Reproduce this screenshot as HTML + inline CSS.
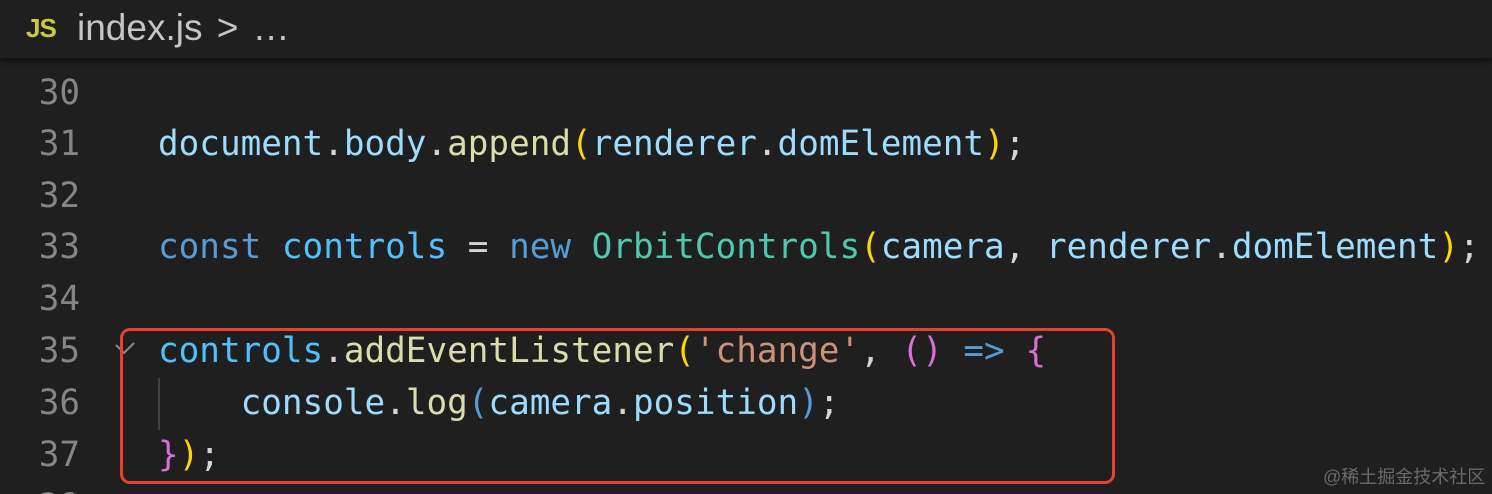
<!DOCTYPE html>
<html><head><meta charset="utf-8"><style>
html,body{margin:0;width:1492px;height:494px;overflow:hidden}
body{background:#1f1f1f;position:relative;font-family:"DejaVu Sans Mono",monospace;}
.hdr{position:absolute;left:0;top:0;width:1492px;height:58px;background:#1f1f1f;box-shadow:0 3px 6px rgba(0,0,0,.55);z-index:2}
.hdr .js{position:absolute;left:26px;top:13px;font:bold 26px "Liberation Sans",sans-serif;color:#cbcb41;letter-spacing:-1px}
.hdr .t{position:absolute;left:77px;top:7px;font:37px "Liberation Sans",sans-serif;color:#c5c5c5;word-spacing:4px}
.ln{position:absolute;left:0;width:80px;text-align:right;color:#858585;font-size:34.3px;line-height:52px}
.c{position:absolute;left:158px;font-size:34.3px;line-height:52px;white-space:pre;color:#d4d4d4}
.v{color:#9cdcfe}.k{color:#569cd6}.f{color:#dcdcaa}.cl{color:#4ec9b0}.s{color:#ce9178}.y{color:#ffd700}.p{color:#da70d6}.cc{color:#4fc1ff}
.box{position:absolute;left:120px;top:328px;width:989px;height:150px;border:3px solid #e5432d;border-radius:10px}
.guide{position:absolute;left:158px;top:378px;width:2px;height:52px;background:#404040}
.wm{position:absolute;left:1323px;top:463px;font:18px "Liberation Sans","Noto Sans CJK SC",sans-serif;color:#6a6a6a}
</style></head><body>
<div class="hdr"><span class="js">JS</span><span class="t">index.js &gt; …</span></div>
<div class="ln" style="top:67px">30</div>
<div class="ln" style="top:118px">31</div>
<div class="ln" style="top:170px">32</div>
<div class="ln" style="top:221px">33</div>
<div class="ln" style="top:273px">34</div>
<div class="ln" style="top:325px">35</div>
<div class="ln" style="top:377px">36</div>
<div class="ln" style="top:429px">37</div>
<div class="ln" style="top:481px">38</div>
<div class="c" style="top:118px"><span class="v">document</span>.<span class="v">body</span>.<span class="f">append</span><span class="y">(</span><span class="v">renderer</span>.<span class="v">domElement</span><span class="y">)</span>;</div>
<div class="c" style="top:221px"><span class="k">const</span> <span class="cc">controls</span> = <span class="k">new</span> <span class="cl">OrbitControls</span><span class="y">(</span><span class="v">camera</span>, <span class="v">renderer</span>.<span class="v">domElement</span><span class="y">)</span>;</div>
<div class="c" style="top:325px"><span class="cc">controls</span>.<span class="f">addEventListener</span><span class="y">(</span><span class="s">'change'</span>, <span class="p">()</span> <span class="k">=&gt;</span> <span class="p">{</span></div>
<div class="c" style="top:377px">    <span class="v">console</span>.<span class="f">log</span><span class="k">(</span><span class="v">camera</span>.<span class="v">position</span><span class="k">)</span>;</div>
<div class="c" style="top:429px"><span class="p">}</span><span class="y">)</span>;</div>
<div class="guide"></div>
<svg style="position:absolute;left:112px;top:340px" width="28" height="20"><path d="M4 5 L12 13 L22 3" stroke="#8a8a8a" stroke-width="2" fill="none"/></svg>
<div class="box"></div>
<div class="wm">@稀土掘金技术社区</div>
</body></html>
